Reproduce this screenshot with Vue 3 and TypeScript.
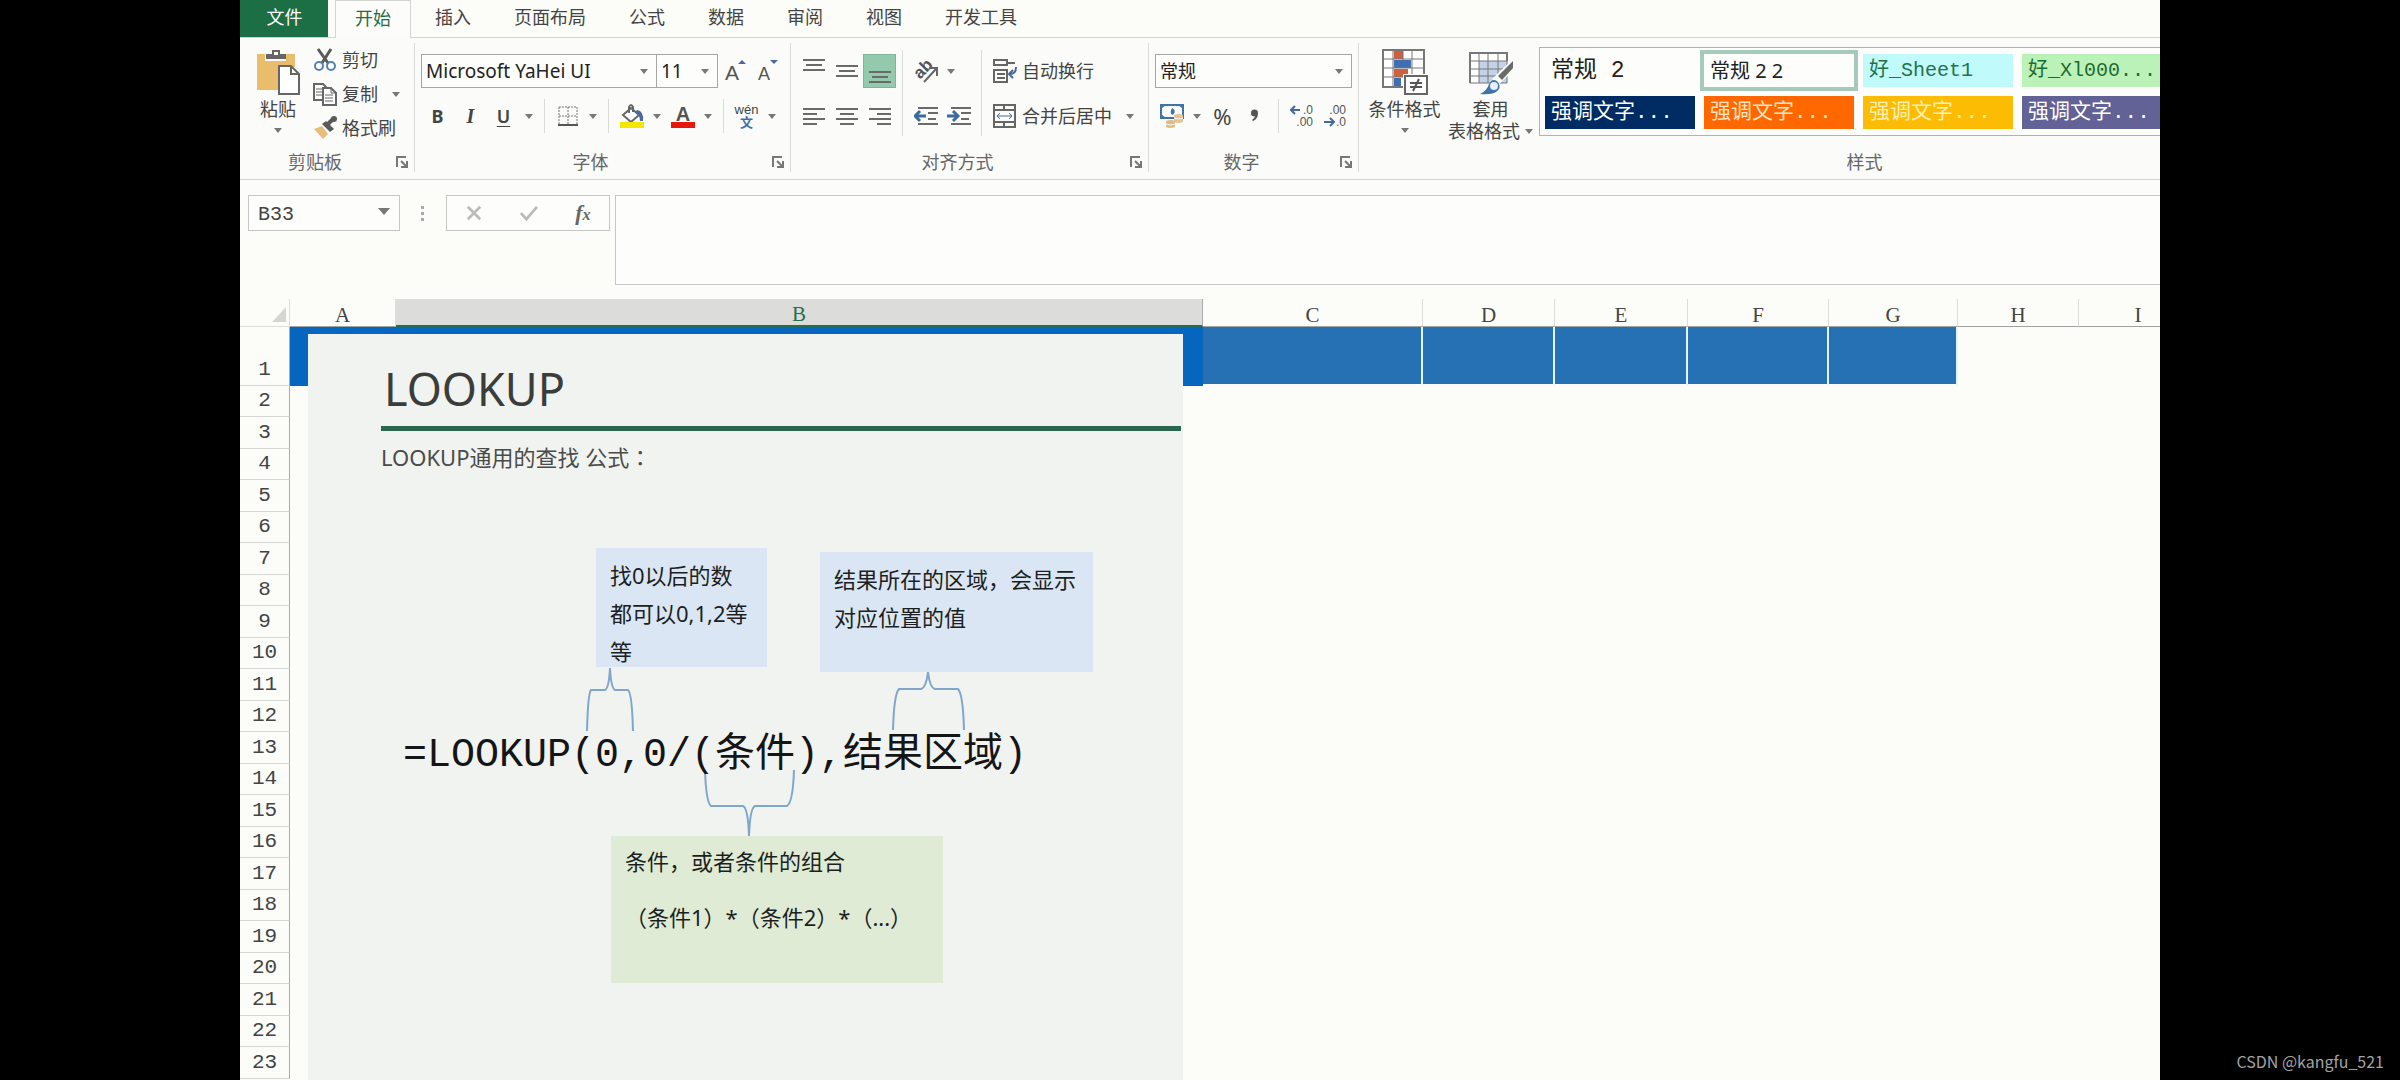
<script setup lang="ts">
import { ref } from 'vue'

interface Column {
  name: string
  width: number
  fill: '' | 'deep' | 'mid'
}

interface CellStyle {
  label: string
  kind: string
}

const tabs: string[] = ['开始', '插入', '页面布局', '公式', '数据', '审阅', '视图', '开发工具']
const activeTab = ref('开始')

const columns: Column[] = [
  { name: 'A', width: 106, fill: 'deep' },
  { name: 'B', width: 807, fill: 'deep' },
  { name: 'C', width: 220, fill: 'mid' },
  { name: 'D', width: 132, fill: 'mid' },
  { name: 'E', width: 133, fill: 'mid' },
  { name: 'F', width: 141, fill: 'mid' },
  { name: 'G', width: 129, fill: 'mid' },
  { name: 'H', width: 121, fill: '' },
  { name: 'I', width: 119, fill: '' },
]
const rowCount = 23
const selectedColumn = 'B'

const cellStyles: CellStyle[] = [
  { label: '常规 2', kind: 'plain' },
  { label: '常规 2 2', kind: 'picked' },
  { label: '好_Sheet1', kind: 'cyan' },
  { label: '好_Xl000...', kind: 'green' },
  { label: '强调文字...', kind: 'navy' },
  { label: '强调文字...', kind: 'orange' },
  { label: '强调文字...', kind: 'amber' },
  { label: '强调文字...', kind: 'violet' },
]

const fontName = ref('Microsoft YaHei UI')
const fontSize = ref('11')
const numberFormat = ref('常规')
const cellName = ref('B33')
const formula = ref('')
</script>

<template>
  <div class="stage">
    <main class="app">
      <nav class="tabs" role="tablist">
        <button class="tab file" type="button">文件</button>
        <button
          v-for="t in tabs"
          :key="t"
          class="tab"
          :class="{ active: t === activeTab }"
          type="button"
          role="tab"
          :aria-selected="t === activeTab"
          @click="activeTab = t"
        >{{ t }}</button>
      </nav>

      <section class="ribbon">
        <!-- Clipboard -->
        <div class="group">
          <div class="body clip">
            <button class="big paste" type="button">
              <svg class="big-icon" viewBox="0 0 46 46">
                <path d="M2 5h38v13H24v23H2z" fill="#e9bd6c" />
                <path d="M10 12V4h6V1h9v3h6v8z" fill="#fbfcf9" />
                <path d="M11 10V5h6V1h8v4h6v5z" fill="#666" />
                <rect x="19" y="3" width="4" height="3" fill="#fbfcf9" />
                <path d="M24 17h12l8 8v20H24z" fill="#fff" stroke="#666" stroke-width="2" />
                <path d="M36 17v8h8" fill="none" stroke="#666" stroke-width="2" />
              </svg>
              <span>粘贴</span>
              <svg class="caret" viewBox="0 0 8 5"><path d="M0 0h8L4 5z" /></svg>
            </button>
            <div class="stack">
              <button class="wide" type="button">
                <svg class="icon" viewBox="0 0 24 24">
                  <path d="M5 1l10 14M18 1L9 15" stroke="#5a5a5a" stroke-width="3" fill="none" />
                  <circle cx="6" cy="18" r="4" fill="#fff" stroke="#5580ad" stroke-width="2" />
                  <circle cx="18" cy="18" r="4" fill="#fff" stroke="#5580ad" stroke-width="2" />
                </svg>剪切
              </button>
              <button class="wide" type="button">
                <svg class="icon" viewBox="0 0 24 24">
                  <path d="M1 2h9l3 3v13H1z" fill="#fff" stroke="#666" stroke-width="2" />
                  <path d="M3 7h6M3 10h6M3 13h6" stroke="#666" />
                  <path d="M10 6h8l5 5v12H10z" fill="#fff" stroke="#666" stroke-width="2" />
                  <path d="M18 6v5h5M12 13h8M12 16h8M12 19h8" fill="none" stroke="#666" />
                </svg>复制
                <svg class="caret after" viewBox="0 0 8 5"><path d="M0 0h8L4 5z" /></svg>
              </button>
              <button class="wide" type="button">
                <svg class="icon" viewBox="0 0 24 24">
                  <path d="M1 13l8-3 6 8-5 5z" fill="#e6bd7b" />
                  <path d="M9 8l4-3 8 8-4 3z" fill="#5a5a5a" />
                  <path d="M15 8l5-5" stroke="#5a5a5a" stroke-width="4" />
                  <circle cx="21" cy="3" r="3" fill="#5a5a5a" />
                </svg>格式刷
              </button>
            </div>
          </div>
          <footer class="foot">
            <span>剪贴板</span>
            <button class="launch" type="button" aria-label="剪贴板选项">
              <svg viewBox="0 0 12 12"><path d="M1 11V1h9" /><path d="M5 5l5 5M11 5v6H5" /></svg>
            </button>
          </footer>
        </div>

        <!-- Font -->
        <div class="group">
          <div class="body rows">
            <div class="row">
              <label class="combo font-name">
                <select v-model="fontName" aria-label="字体"><option>Microsoft YaHei UI</option></select>
                <svg class="caret" viewBox="0 0 8 5"><path d="M0 0h8L4 5z" /></svg>
              </label>
              <label class="combo font-size">
                <select v-model="fontSize" aria-label="字号"><option>11</option></select>
                <svg class="caret" viewBox="0 0 8 5"><path d="M0 0h8L4 5z" /></svg>
              </label>
              <button class="tool" type="button" aria-label="增大字号">
                <svg class="icon" viewBox="0 0 24 24">
                  <text x="2" y="21" font-size="21">A</text><path d="M15 5l4-4 4 4z" fill="#4a6a9b" />
                </svg>
              </button>
              <button class="tool" type="button" aria-label="减小字号">
                <svg class="icon" viewBox="0 0 24 24">
                  <text x="2" y="21" font-size="18">A</text><path d="M14 1h8l-4 4z" fill="#4a6a9b" />
                </svg>
              </button>
            </div>
            <div class="row">
              <button class="tool bold" type="button">B</button>
              <button class="tool ital" type="button">I</button>
              <button class="tool under" type="button">U</button>
              <button class="drop" type="button" aria-label="下划线样式"><svg class="caret" viewBox="0 0 8 5"><path d="M0 0h8L4 5z" /></svg></button>
              <i class="sep"></i>
              <button class="tool" type="button" aria-label="边框">
                <svg class="icon" viewBox="0 0 24 24">
                  <path d="M3 3h18M3 12h18M3 3v18M12 3v18M21 3v18" stroke="#777" stroke-width="1" stroke-dasharray="2 1" fill="none" />
                  <path d="M2 21h20" stroke="#555" stroke-width="2" />
                </svg>
              </button>
              <button class="drop" type="button" aria-label="边框样式"><svg class="caret" viewBox="0 0 8 5"><path d="M0 0h8L4 5z" /></svg></button>
              <i class="sep"></i>
              <button class="tool" type="button" aria-label="填充颜色">
                <svg class="icon" viewBox="0 0 24 24">
                  <path d="M3 11l8-7 8 7-8 7z" fill="#fff" stroke="#666" stroke-width="2" />
                  <path d="M9 9V3q2-4 4 0v5" fill="none" stroke="#666" stroke-width="2" />
                  <path d="M17 6q7 1 6 11l-3 0q0-6-5-9z" fill="#4a6a9b" />
                  <rect y="18" width="24" height="6" fill="#f3e600" />
                </svg>
              </button>
              <button class="drop" type="button" aria-label="选择填充颜色"><svg class="caret" viewBox="0 0 8 5"><path d="M0 0h8L4 5z" /></svg></button>
              <button class="tool" type="button" aria-label="字体颜色">
                <svg class="icon" viewBox="0 0 24 24">
                  <text x="12" y="17" font-size="20" text-anchor="middle" font-weight="700">A</text>
                  <rect y="18" width="24" height="6" fill="#e4180c" />
                </svg>
              </button>
              <button class="drop" type="button" aria-label="选择字体颜色"><svg class="caret" viewBox="0 0 8 5"><path d="M0 0h8L4 5z" /></svg></button>
              <i class="sep"></i>
              <button class="tool pinyin" type="button"><span>wén</span><b>文</b></button>
              <button class="drop" type="button" aria-label="拼音选项"><svg class="caret" viewBox="0 0 8 5"><path d="M0 0h8L4 5z" /></svg></button>
            </div>
          </div>
          <footer class="foot">
            <span>字体</span>
            <button class="launch" type="button" aria-label="字体选项">
              <svg viewBox="0 0 12 12"><path d="M1 11V1h9" /><path d="M5 5l5 5M11 5v6H5" /></svg>
            </button>
          </footer>
        </div>

        <!-- Alignment -->
        <div class="group">
          <div class="body cols">
            <div class="rows">
              <div class="row">
                <button class="tool" type="button" aria-label="顶端对齐">
                  <svg class="icon line" viewBox="0 0 24 24"><path d="M1 1h22M4 6h16M1 11h22" /></svg>
                </button>
                <button class="tool" type="button" aria-label="垂直居中">
                  <svg class="icon line" viewBox="0 0 24 24"><path d="M1 7h22M4 12h16M1 17h22" /></svg>
                </button>
                <button class="tool on" type="button" aria-label="底端对齐">
                  <svg class="icon line" viewBox="0 0 24 24"><path d="M1 13h22M4 18h16M1 23h22" /></svg>
                </button>
              </div>
              <div class="row">
                <button class="tool" type="button" aria-label="左对齐">
                  <svg class="icon line" viewBox="0 0 24 24"><path d="M1 5h22M1 10h14M1 15h22M1 20h14" /></svg>
                </button>
                <button class="tool" type="button" aria-label="居中">
                  <svg class="icon line" viewBox="0 0 24 24"><path d="M1 5h22M5 10h14M1 15h22M5 20h14" /></svg>
                </button>
                <button class="tool" type="button" aria-label="右对齐">
                  <svg class="icon line" viewBox="0 0 24 24"><path d="M1 5h22M9 10h14M1 15h22M9 20h14" /></svg>
                </button>
              </div>
            </div>
            <i class="sep tall"></i>
            <div class="rows">
              <div class="row">
                <button class="tool" type="button" aria-label="方向">
                  <svg class="icon turn" viewBox="0 0 24 24">
                    <text x="1" y="17" font-size="17" font-weight="700" transform="rotate(-45 8 13)">ab</text>
                    <path d="M10 23L22 10M15 9h8v8" fill="none" stroke="#666" stroke-width="2" />
                  </svg>
                </button>
                <button class="drop" type="button" aria-label="方向选项"><svg class="caret" viewBox="0 0 8 5"><path d="M0 0h8L4 5z" /></svg></button>
              </div>
              <div class="row">
                <button class="tool" type="button" aria-label="减少缩进量">
                  <svg class="icon line" viewBox="0 0 24 24">
                    <path d="M4 4h20M14 9h10M14 15h8M4 20h20" />
                    <path d="M12 12H2M6 7l-5 5 5 5" class="blue" />
                  </svg>
                </button>
                <button class="tool" type="button" aria-label="增加缩进量">
                  <svg class="icon line" viewBox="0 0 24 24">
                    <path d="M4 4h20M14 9h10M14 15h8M4 20h20" />
                    <path d="M0 12h10M6 7l5 5-5 5" class="blue" />
                  </svg>
                </button>
              </div>
            </div>
            <i class="sep tall"></i>
            <div class="rows">
              <button class="wide" type="button">
                <svg class="icon" viewBox="0 0 24 24">
                  <path d="M1 1h13v5H1zM14 4h8" fill="none" stroke="#666" stroke-width="2" />
                  <path d="M1 11h13v12H1zM4 15h8M4 19h8" fill="none" stroke="#666" stroke-width="2" />
                  <path d="M23 8q0 7-6 7M20 11l-4 4 4 4" fill="none" stroke="#44699b" stroke-width="2" />
                </svg>自动换行
              </button>
              <button class="wide" type="button">
                <svg class="icon" viewBox="0 0 24 24">
                  <path d="M1 1h21v22H1zM1 6h21M1 18h21M11 1v5M11 18v5" fill="none" stroke="#666" stroke-width="2" />
                  <path d="M4 12h15M7 9l-3 3 3 3M16 9l3 3-3 3" fill="none" stroke="#44699b" stroke-width="1" />
                </svg>合并后居中
                <svg class="caret after" viewBox="0 0 8 5"><path d="M0 0h8L4 5z" /></svg>
              </button>
            </div>
          </div>
          <footer class="foot">
            <span>对齐方式</span>
            <button class="launch" type="button" aria-label="对齐选项">
              <svg viewBox="0 0 12 12"><path d="M1 11V1h9" /><path d="M5 5l5 5M11 5v6H5" /></svg>
            </button>
          </footer>
        </div>

        <!-- Number -->
        <div class="group">
          <div class="body rows">
            <div class="row">
              <label class="combo number">
                <select v-model="numberFormat" aria-label="数字格式"><option>常规</option></select>
                <svg class="caret" viewBox="0 0 8 5"><path d="M0 0h8L4 5z" /></svg>
              </label>
            </div>
            <div class="row">
              <button class="tool" type="button" aria-label="会计数字格式">
                <svg class="icon" viewBox="0 0 24 24">
                  <rect x="1" y="1" width="22" height="13" fill="#fff" stroke="#3f74a8" stroke-width="2" />
                  <path d="M1 1h5L1 5zM23 1h-5l5 4zM1 14h5l-5-4z" fill="#3f74a8" />
                  <path d="M12 4q5 2 1 7-4-1-1-7z" fill="#3f74a8" />
                  <path d="M14 11q5-2 9 0v7q-5 2-9 0z" fill="#e5c491" />
                  <path d="M6 17q5-2 9 0v6q-5 2-9 0z" fill="#e0bb83" />
                  <path d="M14 14q5 2 9 0M6 20q5 2 9 0" stroke="#fff" fill="none" />
                </svg>
              </button>
              <button class="drop" type="button" aria-label="货币选项"><svg class="caret" viewBox="0 0 8 5"><path d="M0 0h8L4 5z" /></svg></button>
              <button class="tool pct" type="button">%</button>
              <button class="tool" type="button" aria-label="千位分隔样式">
                <svg class="icon" viewBox="0 0 24 24">
                  <path d="M7 9a3 3 0 1 1 7 0q0 6-5 8l-1-1q3-2 3-4-4 1-4-3z" fill="#555" />
                </svg>
              </button>
              <i class="sep"></i>
              <button class="tool" type="button" aria-label="增加小数位数">
                <svg class="icon" viewBox="0 0 24 24">
                  <path d="M10 6H2M5 2L1 6l4 4" fill="none" stroke="#44699b" stroke-width="2" />
                  <text x="23" y="10" font-size="12" text-anchor="end">.0</text>
                  <text x="23" y="22" font-size="12" text-anchor="end">.00</text>
                </svg>
              </button>
              <button class="tool" type="button" aria-label="减少小数位数">
                <svg class="icon" viewBox="0 0 24 24">
                  <path d="M1 18h9M7 14l4 4-4 4" fill="none" stroke="#44699b" stroke-width="2" />
                  <text x="23" y="10" font-size="12" text-anchor="end">.00</text>
                  <text x="23" y="22" font-size="12" text-anchor="end">.0</text>
                </svg>
              </button>
            </div>
          </div>
          <footer class="foot">
            <span>数字</span>
            <button class="launch" type="button" aria-label="数字选项">
              <svg viewBox="0 0 12 12"><path d="M1 11V1h9" /><path d="M5 5l5 5M11 5v6H5" /></svg>
            </button>
          </footer>
        </div>

        <!-- Styles -->
        <div class="group styles">
          <div class="body">
            <button class="big cond" type="button">
              <svg class="big-icon" viewBox="0 0 46 46">
                <path d="M1 1h41v37H1z" fill="#fff" />
                <rect x="12" y="1" width="9" height="9" fill="#cf5f3d" />
                <rect x="12" y="11" width="17" height="8" fill="#3f6fae" />
                <rect x="12" y="20" width="14" height="8" fill="#cf5f3d" />
                <rect x="12" y="29" width="7" height="9" fill="#3f6fae" />
                <path d="M1 1h41v37H1zM1 10h41M1 19h41M1 28h41M11 1v37M21 1v10M30 1v37" fill="none" stroke="#777" stroke-width="1" />
                <path d="M1 1h41v37H1z" fill="none" stroke="#777" stroke-width="2" />
                <rect x="21" y="25" width="25" height="21" fill="#fbfcf9" />
                <rect x="23" y="27" width="22" height="18" fill="#fff" stroke="#666" stroke-width="2" />
                <path d="M28 34h12M28 38h12M37 30l-6 12" stroke="#555" stroke-width="2" />
              </svg>
              <span>条件格式</span>
              <svg class="caret" viewBox="0 0 8 5"><path d="M0 0h8L4 5z" /></svg>
            </button>
            <button class="big table-style" type="button">
              <svg class="big-icon" viewBox="0 0 46 46">
                <rect x="2" y="4" width="37" height="30" fill="#fff" />
                <path d="M11 12h28v22H11z" fill="#c3d2e6" />
                <path d="M2 4h37v30H2zM2 12h37M2 20h37M2 27h37M11 4v30M20 4v30M30 4v30" fill="none" stroke="#777" stroke-width="1" />
                <path d="M2 34V4h37v8" fill="none" stroke="#777" stroke-width="2" />
                <path d="M46 9v12L30 36l-6-6z" fill="#fbfcf9" />
                <path d="M45 12v7L34 31l-4-4z" fill="#6a6a6a" />
                <path d="M12 45q7-3 9-10 4-7 9-2 4 6-2 10-5 3-16 2z" fill="#3f74a8" />
                <circle cx="26" cy="37" r="4" fill="#e6eff8" />
              </svg>
              <span>套用</span>
              <span class="with-caret">表格格式<svg class="caret" viewBox="0 0 8 5"><path d="M0 0h8L4 5z" /></svg></span>
            </button>
            <div class="gallery">
              <button v-for="(s, i) in cellStyles" :key="i" class="swatch" :class="s.kind" type="button">{{ s.label }}</button>
            </div>
          </div>
          <footer class="foot"><span>样式</span></footer>
        </div>
      </section>

      <section class="formula-bar">
        <div class="name-box">
          <input v-model="cellName" type="text" aria-label="名称框" />
          <button type="button" aria-label="名称列表"><svg viewBox="0 0 12 7"><path d="M0 0h12L6 7z" fill="#777" /></svg></button>
        </div>
        <svg class="dots" viewBox="0 0 4 16"><path d="M0 0h3v3H0zM0 6h3v3H0zM0 12h3v3H0z" fill="#aaa" /></svg>
        <div class="actions">
          <button type="button" aria-label="取消"><svg viewBox="0 0 20 18"><path d="M3 2l14 14M17 2L3 16" fill="none" stroke="#bbb" stroke-width="3" /></svg></button>
          <button type="button" aria-label="输入"><svg viewBox="0 0 20 18"><path d="M1 9l6 7L19 2" fill="none" stroke="#bbb" stroke-width="3" /></svg></button>
          <button class="fx" type="button">f<small>x</small></button>
        </div>
        <textarea v-model="formula" aria-label="编辑栏"></textarea>
      </section>

      <section class="sheet">
        <table>
          <colgroup>
            <col class="head-col" />
            <col v-for="c in columns" :key="c.name" :style="{ width: c.width + 'px' }" />
          </colgroup>
          <thead>
            <tr>
              <th class="corner"><svg viewBox="0 0 14 15"><path d="M14 0v15H0z" fill="#d4d6d2" /></svg></th>
              <th v-for="c in columns" :key="c.name" scope="col" :class="{ selected: c.name === selectedColumn }">{{ c.name }}</th>
            </tr>
          </thead>
          <tbody>
            <tr v-for="r in rowCount" :key="r">
              <th scope="row">{{ r }}</th>
              <td v-for="c in columns" :key="c.name" :class="r === 1 ? c.fill : ''"></td>
            </tr>
          </tbody>
        </table>

        <article class="panel">
          <h1>LOOKUP</h1>
          <hr />
          <p class="lead">LOOKUP通用的查找 公式<span class="colon">：</span></p>
          <div class="note zero">找0以后的数<br />都可以0,1,2等<br />等</div>
          <div class="note result">结果所在的区域，会显示<br />对应位置的值</div>
          <svg class="braces" viewBox="0 0 876 746">
            <path d="M279 397q1-38 4-41h14q4-2 5-22q1 20 5 22h13q4 3 5 41" />
            <path d="M585 396q1-36 6-41h22q5-1 7-17q2 16 7 17h23q5 5 6 41" />
            <path d="M397 436q1 32 6 36h32q5 2 6 30q1-28 6-30h32q6-4 7-36" />
          </svg>
          <p class="formula">=LOOKUP(0,0/(条件),结果区域)</p>
          <div class="note cond-note">
            <p>条件，或者条件的组合</p>
            <p>（条件1）*（条件2）*（...）</p>
          </div>
        </article>
      </section>
    </main>
    <div class="watermark">CSDN @kangfu_521</div>
  </div>
</template>

<style>
body {
  margin: 0;
  background: #000;
}
</style>

<style scoped>
* {
  box-sizing: border-box;
}

.stage {
  position: relative;
  min-height: 100vh;
  padding: 0 10%;
  display: flex;
  background: #000;
  font-family: "Noto Sans", "Noto Sans CJK SC", sans-serif;
  font-size: 18px;
  line-height: 22px;
  color: #444;
}

.app {
  flex: 1;
  min-width: 0;
  display: flex;
  flex-direction: column;
  background: #fcfdf9;
  overflow: hidden;
}

button,
input,
select,
textarea {
  margin: 0;
  padding: 0;
  border: 0;
  border-radius: 0;
  background: none;
  font: inherit;
  color: inherit;
  white-space: nowrap;
}

svg {
  display: block;
  flex: none;
}

svg text {
  fill: #555;
  font-family: "Liberation Sans", sans-serif;
}

/* Tabs */
.tabs {
  display: flex;
  height: 38px;
  border-bottom: 1px solid #d2d4d1;
}

.tab {
  padding: 0 21px 3px 22px;
}

.tab.file {
  width: 88px;
  margin-right: 5px;
  background: #1c6e45;
  color: #fff;
}

.tab.active {
  height: 38px;
  margin: 0 2px;
  padding: 0 19px 4px;
  border: solid #d2d4d1;
  border-width: 1px 1px 0;
  background: #fcfdfb;
  color: #1c6e45;
}

/* Ribbon */
.ribbon {
  display: flex;
  height: 142px;
  padding: 5px 0 7px;
  border-bottom: 1px solid #d2d4d1;
  background: #fbfcf9;
}

.group {
  display: flex;
  flex-direction: column;
  justify-content: space-between;
  border-right: 1px solid #d9dbd8;
}

.group.styles {
  flex: 1;
  min-width: 0;
  border-right: 0;
}

.body {
  display: flex;
  padding: 0 6px;
}

.clip {
  width: 174px;
  padding: 0 0 0 8px;
}

.rows {
  display: flex;
  flex-direction: column;
  gap: 11px;
}

.body.rows,
.cols .rows {
  padding-top: 11px;
}

.row {
  display: flex;
  align-items: center;
  height: 34px;
}

.foot {
  display: flex;
  align-items: center;
  height: 20px;
  color: #666;
}

.foot span {
  flex: 1;
  text-align: center;
}

.styles .foot span {
  padding-left: 210px;
}

.launch {
  width: 12px;
  margin: 0 6px;
}

.launch svg {
  width: 12px;
  height: 12px;
  fill: none;
  stroke: #777;
  stroke-width: 2;
}

.big {
  display: flex;
  flex-direction: column;
  align-items: center;
  padding-top: 6px;
}

.big span {
  height: 22px;
}

.big > .caret {
  margin-top: 8px;
}

.big-icon {
  width: 46px;
  height: 46px;
  margin-bottom: 3px;
}

.paste {
  width: 60px;
}

.cond {
  width: 79px;
}

.table-style {
  width: 93px;
}

.with-caret {
  display: flex;
  align-items: center;
  gap: 5px;
}

.caret {
  width: 8px;
  height: 5px;
  fill: #777;
}

.caret.after {
  margin-left: 9px;
}

.icon {
  width: 24px;
  height: 24px;
}

.icon.turn {
  overflow: visible;
}

.icon.line {
  fill: none;
  stroke: #6a6a6a;
  stroke-width: 2;
}

.icon.line .blue {
  stroke: #3c6a9c;
  stroke-width: 3;
}

.wide {
  display: flex;
  align-items: center;
  gap: 5px;
  height: 34px;
  padding: 0 8px 0 5px;
}

.tool {
  display: flex;
  align-items: center;
  justify-content: center;
  width: 33px;
  height: 34px;
}

.tool.on {
  border: 1px solid #84b39c;
  background: #93c9ad;
}

.drop {
  display: flex;
  align-items: center;
  justify-content: center;
  width: 18px;
  height: 34px;
}

.sep {
  width: 1px;
  height: 34px;
  margin: 0 6px;
  background: #d9dbd8;
}

.sep.tall {
  height: 86px;
  margin-top: 7px;
}

.bold {
  font-weight: 700;
}

.ital {
  font: italic 700 20px "Liberation Serif", serif;
}

.under {
  font-weight: 600;
  text-decoration: underline;
  text-underline-offset: 3px;
}

.pct {
  font-size: 22px;
}

.pinyin {
  flex-direction: column;
  font-family: "Liberation Sans", "Noto Sans CJK SC", sans-serif;
  font-size: 13px;
  line-height: 13px;
}

.pinyin b {
  color: #3f6fae;
}

.combo {
  display: grid;
  grid-template-columns: 1fr 16px;
  align-items: center;
  height: 34px;
  border: 1px solid #a5a7a4;
  background: #fdfefc;
  color: #222;
}

.combo select {
  grid-area: 1 / 1 / 2 / 3;
  width: 100%;
  height: 32px;
  padding-left: 4px;
  appearance: none;
  outline: 0;
}

.combo .caret {
  grid-area: 1 / 2;
  pointer-events: none;
}

.font-name {
  width: 236px;
  font-size: 19px;
}

.font-size {
  width: 61px;
  border-left: 0;
  font-size: 19px;
}

.number {
  width: 197px;
}

.gallery {
  flex: 1;
  align-self: flex-start;
  display: grid;
  grid-template-columns: repeat(3, 150px) 1fr;
  grid-auto-rows: 33px;
  gap: 9px;
  margin: 4px 0 0 2px;
  padding: 6px 0 6px 5px;
  border: solid #b0b2b0;
  border-width: 1px 0 1px 1px;
  background: #fdfefc;
}

.styles .body {
  padding-right: 0;
}

.swatch {
  padding-left: 6px;
  text-align: left;
  font-family: "Liberation Mono", "Noto Sans CJK SC", monospace;
  font-size: 20px;
  color: #fff;
}

.swatch.plain {
  font-size: 23px;
  color: #222;
}

.swatch.picked {
  outline: 4px solid #a5c9ba;
  font-family: "Noto Sans", "Noto Sans CJK SC", sans-serif;
  color: #222;
}

.swatch.cyan {
  background: #c0fafa;
  color: #22724a;
}

.swatch.green {
  background: #bbf2b8;
  color: #1d6b34;
}

.swatch.navy {
  background: #002c63;
}

.swatch.orange {
  background: #ff6800;
  color: #ffe3c2;
}

.swatch.amber {
  background: #fdbc04;
  color: #fff0b0;
}

.swatch.violet {
  background: #626296;
}

.swatch.navy,
.swatch.orange,
.swatch.amber,
.swatch.violet {
  font-size: 21px;
}

/* Formula bar */
.formula-bar {
  display: flex;
  align-items: flex-start;
  height: 119px;
  padding: 15px 0 0 8px;
}

.name-box {
  display: flex;
  width: 152px;
  height: 36px;
  border: 1px solid #c6c8c5;
  background: #fdfefb;
}

.name-box input {
  flex: 1;
  min-width: 0;
  padding: 4px 0 0 9px;
  font-family: "Liberation Mono", monospace;
  font-size: 20px;
  outline: 0;
}

.name-box button {
  width: 30px;
}

.name-box svg {
  width: 12px;
  height: 7px;
  margin: 0 auto 4px;
}

.dots {
  width: 4px;
  height: 16px;
  margin: 11px 21px;
}

.actions {
  display: flex;
  justify-content: space-around;
  width: 164px;
  height: 36px;
  margin-right: 5px;
  border: 1px solid #c6c8c5;
  background: #fdfefb;
}

.actions svg {
  width: 18px;
  height: 16px;
}

.fx {
  font: italic 700 22px "Liberation Serif", serif;
  color: #666;
}

.fx small {
  font-size: 16px;
}

.formula-bar textarea {
  flex: 1;
  min-width: 0;
  height: 90px;
  border: solid #c6c8c5;
  border-width: 1px 0 1px 1px;
  background: #fdfefb;
  resize: none;
}

/* Grid */
.sheet {
  position: relative;
  flex: 1;
  overflow: hidden;
}

table {
  width: 1958px;
  table-layout: fixed;
  border-collapse: separate;
  border-spacing: 0;
  font-family: "Liberation Mono", monospace;
  font-size: 21px;
}

.head-col {
  width: 50px;
}

th,
td {
  padding: 0;
  font-weight: 400;
}

thead th {
  height: 26px;
  padding-top: 4px;
  border-right: 1px solid #dcdedb;
  border-bottom: 1px solid #9fa4a0;
  font-family: "Liberation Serif", serif;
}

thead .corner {
  border-bottom-color: #dcdedb;
}

.corner svg {
  width: 14px;
  height: 15px;
  margin-left: 32px;
}

thead .selected {
  border-right-color: #aaa;
  border-bottom: 2px solid #24704e;
  background: #dcdddb;
  color: #24704e;
}

tbody th {
  border-right: 1px solid #a9aba8;
  border-bottom: 1px solid #d6d8d5;
}

tbody tr {
  height: 31px;
}

tbody tr:nth-child(odd) {
  height: 32px;
}

tbody tr:first-child {
  height: 59px;
}

tbody tr:first-child th {
  padding-top: 28px;
}

.deep {
  background: #0666bf;
}

.mid {
  border-right: 2px solid #e4f6fb;
  border-bottom: 2px solid #fcfdf9;
  background: #2571b3;
}

/* Drawing laid over the cells */
.panel {
  position: absolute;
  top: 35px;
  bottom: 0;
  left: 68px;
  width: 875px;
  padding: 26px 2px 0 73px;
  background: #f1f3f0;
  font-size: 22px;
  color: #1c1f22;
}

h1 {
  margin: 0 0 8px 3px;
  font-size: 45px;
  line-height: 58px;
  font-weight: 400;
  color: #3b3d3a;
}

hr {
  height: 5px;
  margin: 0 0 10px;
  border: 0;
  background: #2a664d;
}

.lead {
  margin: 0;
  line-height: 30px;
  color: #4a4c49;
}

.colon {
  font-family: "Noto Sans CJK TC", sans-serif;
}

.note {
  position: absolute;
  padding: 8px 14px;
  line-height: 38px;
  white-space: nowrap;
}

.zero {
  top: 214px;
  left: 288px;
  width: 171px;
  height: 119px;
  background: #dae6f4;
}

.result {
  top: 218px;
  left: 512px;
  width: 273px;
  height: 120px;
  background: #dae6f4;
}

.cond-note {
  top: 502px;
  left: 303px;
  width: 332px;
  height: 147px;
  padding-top: 6px;
  background: #dfebd4;
}

.cond-note p {
  margin: 0 0 18px;
}

.braces {
  position: absolute;
  top: 0;
  left: 0;
  width: 876px;
  height: 746px;
  fill: none;
  stroke: #7fa6cb;
  stroke-width: 2;
}

.formula {
  position: absolute;
  top: 394px;
  left: 95px;
  margin: 0;
  font-family: "Liberation Mono", "Noto Sans CJK SC", monospace;
  font-size: 40px;
  line-height: 56px;
  white-space: nowrap;
  color: #151515;
}

.watermark {
  position: absolute;
  right: 16px;
  bottom: 8px;
  font-family: "Noto Sans CJK SC", sans-serif;
  font-size: 16px;
  color: #a3a3a3;
}
</style>
